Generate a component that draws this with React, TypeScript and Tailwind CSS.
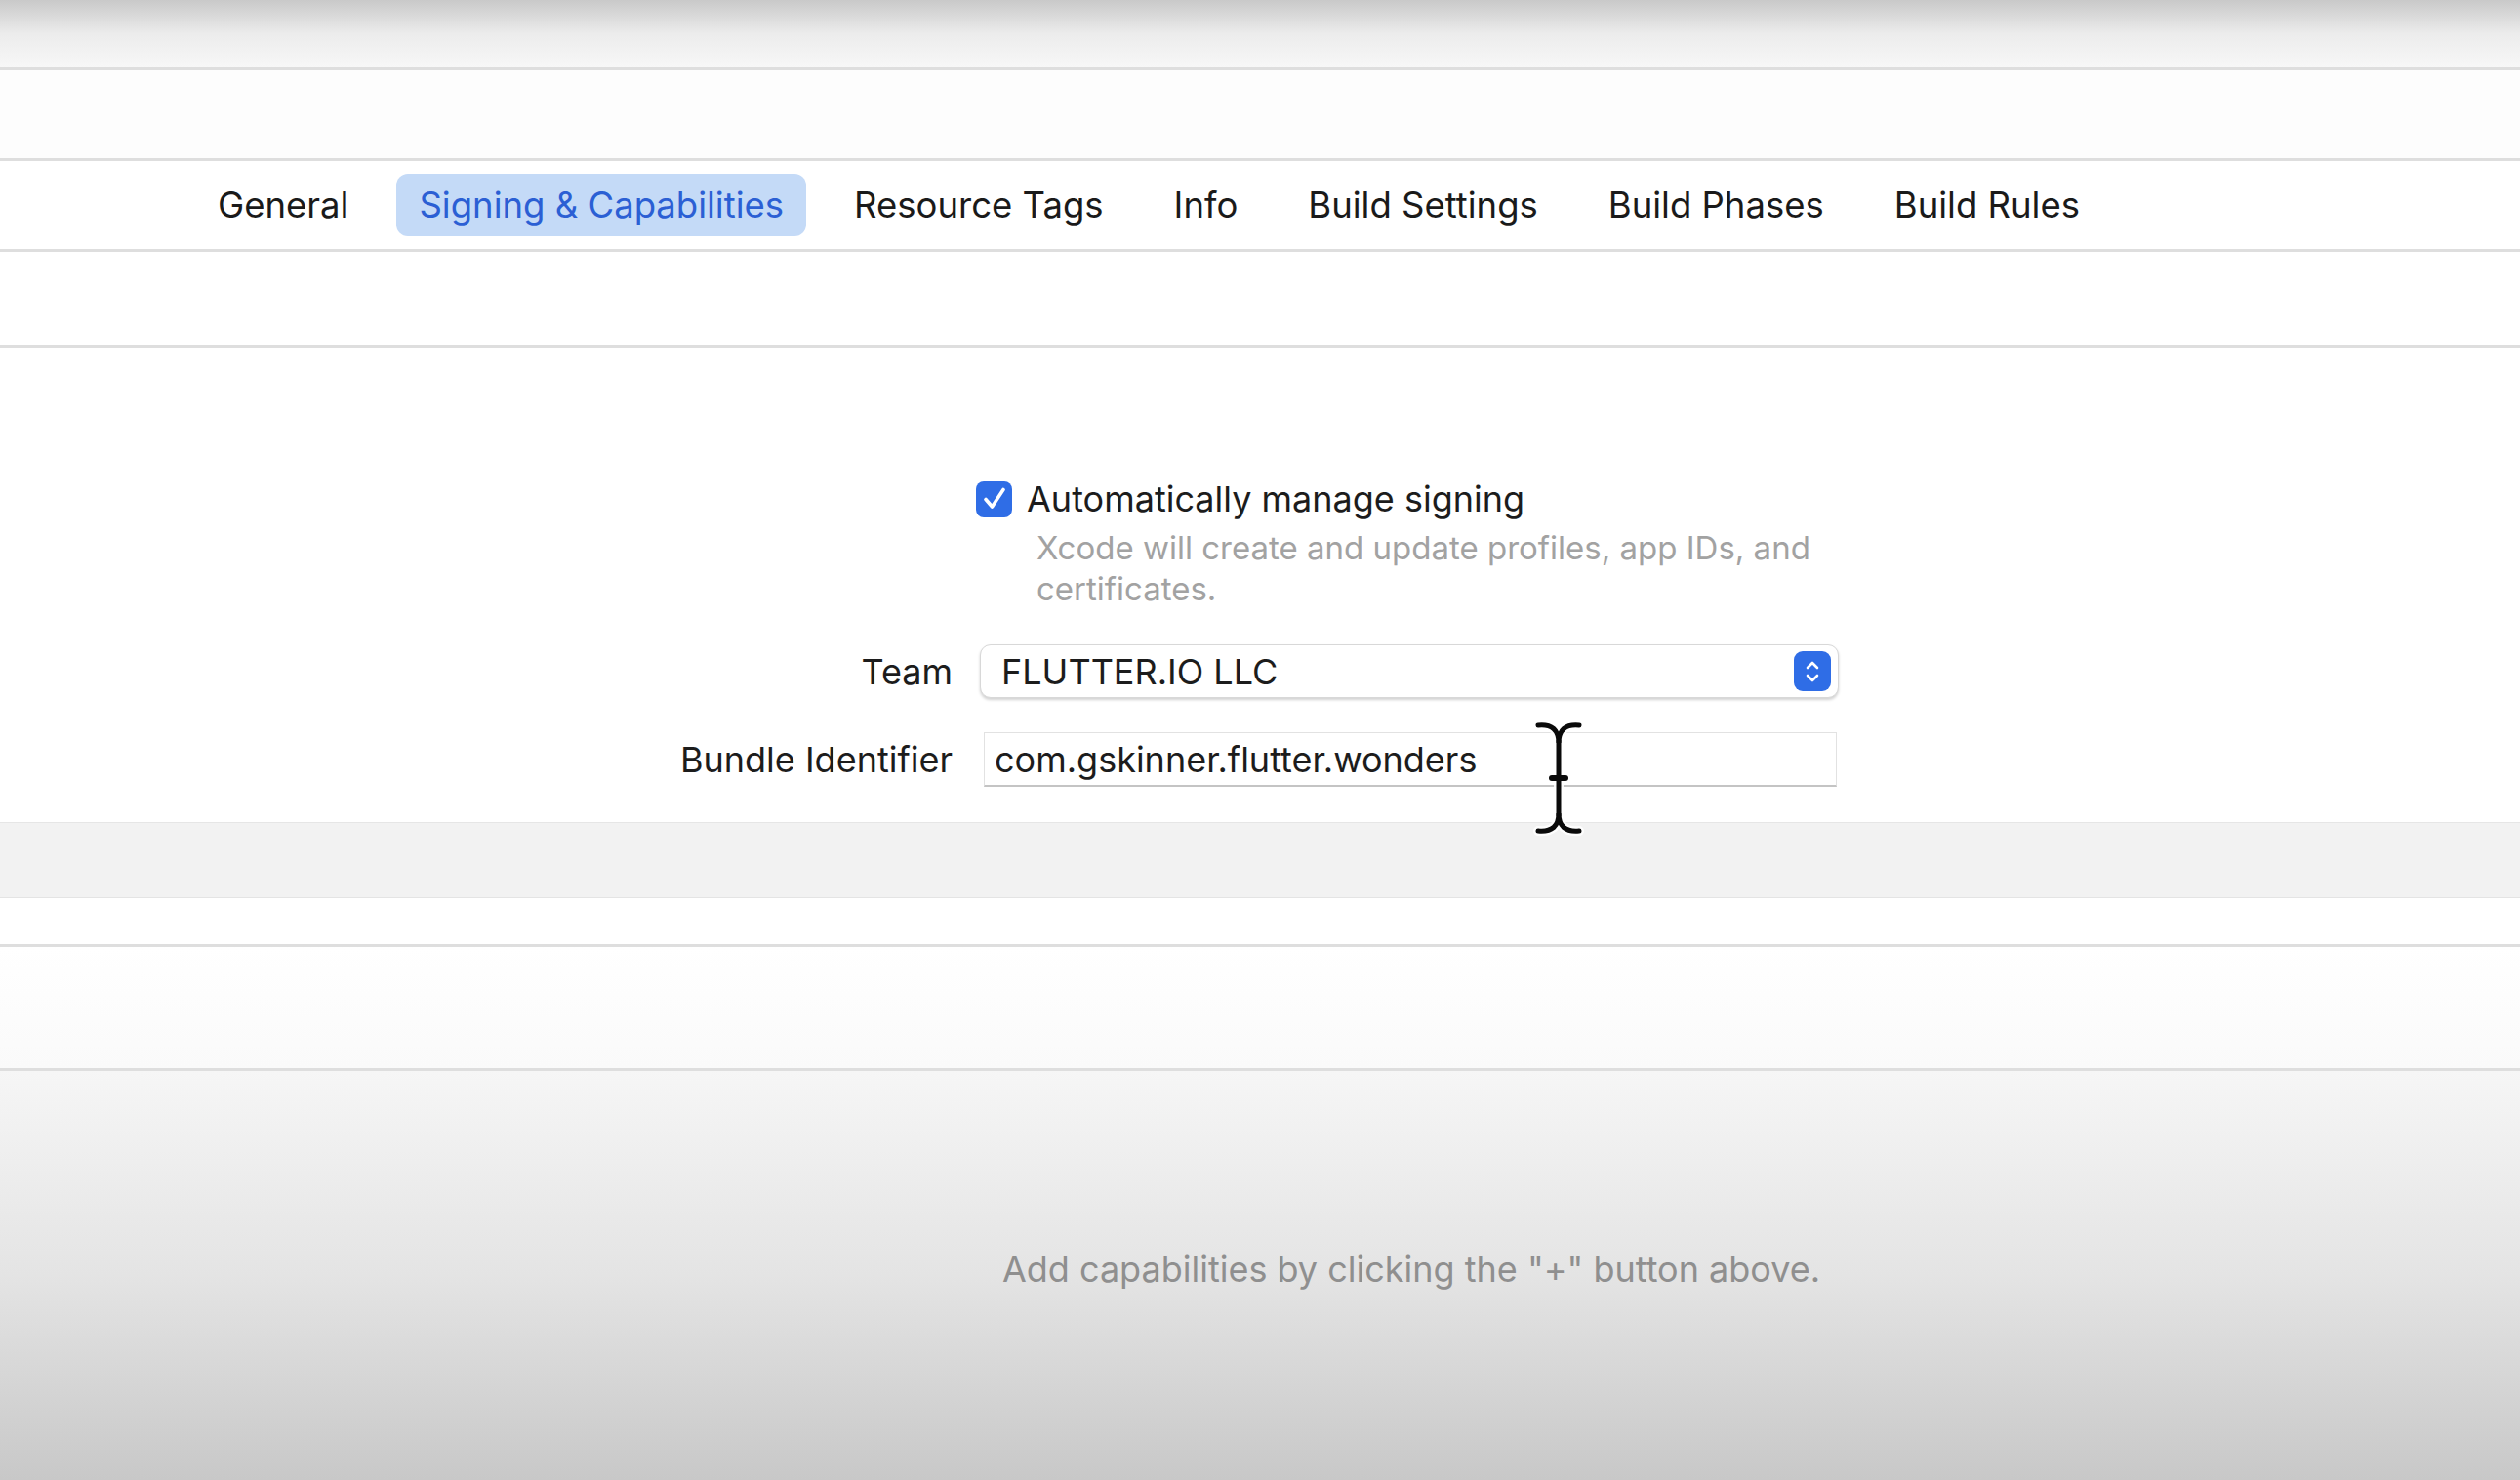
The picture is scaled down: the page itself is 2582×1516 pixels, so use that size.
import React from 'react'

const tabs = [
  'General',
  'Signing & Capabilities',
  'Resource Tags',
  'Info',
  'Build Settings',
  'Build Phases',
  'Build Rules',
]

function Divider() {
  return <div className="h-[3px] bg-[#dedede]" />
}

function IBeam() {
  return (
    <svg width="56" height="124" viewBox="0 0 56 124" className="absolute left-[560px] top-[-16px]">
      <g fill="none" strokeLinecap="round">
        <g stroke="#ffffff" strokeWidth="10" opacity="0.9">
          <path d="M7 8 Q28 6 28 26 Q28 6 49 8" />
          <path d="M28 24 V100" />
          <path d="M7 116 Q28 118 28 98 Q28 118 49 116" />
          <path d="M21 62 H35" />
        </g>
        <g stroke="#0a0a0a" strokeWidth="5">
          <path d="M7 8 Q28 6 28 26 Q28 6 49 8" />
          <path d="M28 24 V100" />
          <path d="M7 116 Q28 118 28 98 Q28 118 49 116" />
          <path d="M21 62 H35" strokeWidth="6" />
        </g>
      </g>
    </svg>
  )
}

export default function App() {
  return (
    <div
      className="w-[2582px] h-[1516px] overflow-hidden flex flex-col bg-white text-[#1c1c1c]"
      style={{ fontFamily: 'Inter, "Noto Sans", sans-serif' }}
    >
      {/* window top */}
      <div className="h-[69px] bg-gradient-to-b from-[#c9c9c9] via-[#ececec] to-[#f7f7f7]" />
      <Divider />
      <div className="h-[90px] bg-[#fdfdfd]" />
      <Divider />

      {/* tab bar */}
      <div className="h-[90px] flex items-center pl-[200px] gap-[26px]">
        {tabs.map((t) => (
          <div
            key={t}
            className={
              t === 'Signing & Capabilities'
                ? 'h-[64px] px-[23px] flex items-center rounded-[12px] bg-[#c4daf7] text-[#2b5fd4] text-[36.5px]'
                : 'h-[64px] px-[23px] flex items-center text-[36.5px] text-[#1a1a1a]'
            }
          >
            {t}
          </div>
        ))}
      </div>
      <Divider />
      <div className="h-[95px]" />
      <Divider />

      {/* signing form */}
      <div className="h-[486px] pt-[128px] pl-[696px]">
        <div className="grid grid-cols-[280px_880px] gap-x-[28px] items-center">
          <div />
          <div className="flex items-center gap-[15px] -ml-[4px]">
            <div className="w-[37px] h-[37px] rounded-[8px] bg-[#2f6de6] flex items-center justify-center">
              <svg width="30" height="30" viewBox="0 0 30 30" fill="none">
                <path d="M6 15.5 L12.5 23 L24 5.5" stroke="white" strokeWidth="3.6" strokeLinecap="round" strokeLinejoin="round" />
              </svg>
            </div>
            <span className="text-[36px]">Automatically manage signing</span>
          </div>

          <div />
          <div className="pl-[58px] pt-[2px] text-[33px] leading-[42px] text-[#a2a2a2]">
            Xcode will create and update profiles, app IDs, and
            <br />
            certificates.
          </div>

          <div className="text-right text-[36px] mt-[36px]">Team</div>
          <div className="mt-[36px] h-[55px] rounded-[11px] border border-[#d8d8d8] bg-white shadow-[0_2px_3px_rgba(0,0,0,0.18)] flex items-center pl-[21px] pr-[7px]">
            <span className="text-[36px] flex-1">FLUTTER.IO LLC</span>
            <div className="w-[38px] h-[41px] rounded-[9px] bg-[#2f6de6] flex items-center justify-center">
              <svg width="20" height="28" viewBox="0 0 20 28" fill="none">
                <path d="M5 10 L10 5 L15 10" stroke="white" strokeWidth="2.6" strokeLinecap="round" strokeLinejoin="round" />
                <path d="M5 18 L10 23 L15 18" stroke="white" strokeWidth="2.6" strokeLinecap="round" strokeLinejoin="round" />
              </svg>
            </div>
          </div>

          <div className="text-right text-[36px] mt-[35px]">Bundle Identifier</div>
          <div className="relative mt-[35px] h-[56px] ml-[4px] w-[874px] border border-[#e2e2e2] border-b-[#c4c4c4] border-b-[2px] bg-white flex items-center pl-[10px]">
            <span className="text-[36px]">com.gskinner.flutter.wonders</span>
            <IBeam />
          </div>
        </div>
      </div>

      {/* capabilities header strip */}
      <div className="h-[77px] bg-[#f2f2f2] border-t border-[#e6e6e6]" />
      <div className="h-[48px] bg-white border-t border-[#e4e4e4]" />
      <Divider />
      <div className="h-[124px] bg-gradient-to-b from-white to-[#fafafa]" />
      <Divider />

      {/* empty capabilities area */}
      <div className="flex-1 bg-gradient-to-b from-[#f6f6f6] via-[#e4e4e4] to-[#c8c8c8] pt-[176px]">
        <div className="ml-[1006px] w-[880px] text-center text-[36px] text-[#8f8f8f]">
          Add capabilities by clicking the "+" button above.
        </div>
      </div>
    </div>
  )
}
